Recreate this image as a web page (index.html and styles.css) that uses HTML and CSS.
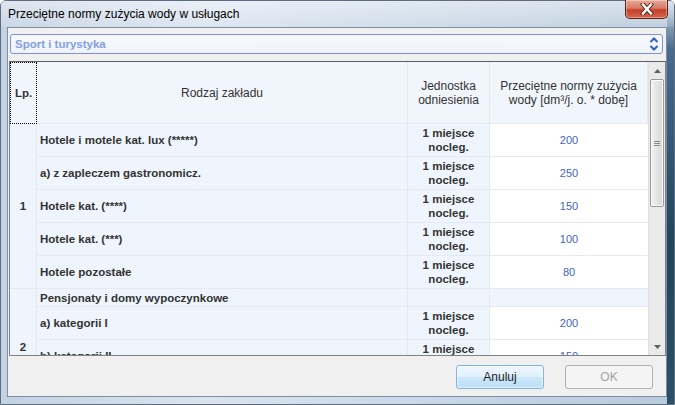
FILE: index.html
```html
<!DOCTYPE html>
<html lang="pl">
<head>
<meta charset="utf-8">
<title>Przeciętne normy zużycia wody w usługach</title>
<link rel="stylesheet" href="styles.css">
</head>
<body>
<div class="window">
  <div class="titlebar">
    <span class="title">Przeciętne normy zużycia wody w usługach</span>
    <div class="close">
      <svg width="18" height="12" viewBox="0 0 18 12"><path d="M5 1.5 L13 10.5 M13 1.5 L5 10.5" stroke="#5a2a20" stroke-width="4.2" stroke-linecap="square"/><path d="M5 1.5 L13 10.5 M13 1.5 L5 10.5" stroke="#ffffff" stroke-width="2.4" stroke-linecap="square"/></svg>
    </div>
  </div>
  <div class="client">
    <div class="combo">
      <span class="combo-text">Sport i turystyka</span>
      <svg class="combo-arrows" width="10" height="16" viewBox="0 0 10 16"><path d="M1.5 6 L5 2.5 L8.5 6 M1.5 10 L5 13.5 L8.5 10" fill="none" stroke="#2f5fc0" stroke-width="2"/></svg>
    </div>
    <div class="table">
      <div class="viewport">
        <div class="grid">
          <div class="hcell lp-head">Lp.</div>
          <div class="hcell">Rodzaj zakładu</div>
          <div class="hcell">Jednostka<br>odniesienia</div>
          <div class="hcell">Przeciętne normy zużycia<br>wody [dm³/j. o. * dobę]</div>

          <div class="lp lp1">1</div>
          <div class="name">Hotele i motele kat. lux (*****)</div>
          <div class="unit">1 miejsce<br>nocleg.</div>
          <div class="val">200</div>

          <div class="name">a) z zapleczem gastronomicz.</div>
          <div class="unit">1 miejsce<br>nocleg.</div>
          <div class="val">250</div>

          <div class="name">Hotele kat. (****)</div>
          <div class="unit">1 miejsce<br>nocleg.</div>
          <div class="val">150</div>

          <div class="name">Hotele kat. (***)</div>
          <div class="unit">1 miejsce<br>nocleg.</div>
          <div class="val">100</div>

          <div class="name">Hotele pozostałe</div>
          <div class="unit">1 miejsce<br>nocleg.</div>
          <div class="val">80</div>

          <div class="lp lp2">2</div>
          <div class="name">Pensjonaty i domy wypoczynkowe</div>
          <div class="unit"></div>
          <div class="val group"></div>

          <div class="name">a) kategorii I</div>
          <div class="unit">1 miejsce<br>nocleg.</div>
          <div class="val">200</div>

          <div class="name">b) kategorii II</div>
          <div class="unit">1 miejsce<br>nocleg.</div>
          <div class="val">150</div>

          <div class="name">c) kategorii III</div>
          <div class="unit">1 miejsce<br>nocleg.</div>
          <div class="val">100</div>
        </div>
      </div>
      <div class="vscroll">
        <div class="sbtn"><svg width="7" height="4" viewBox="0 0 7 4"><path d="M0 4 L3.5 0 L7 4 Z" fill="#606060"/></svg></div>
        <div class="track">
          <div class="thumb"><span class="grip"></span></div>
        </div>
        <div class="sbtn"><svg width="7" height="4" viewBox="0 0 7 4"><path d="M0 0 L3.5 4 L7 0 Z" fill="#606060"/></svg></div>
      </div>
    </div>
    <div class="footer">
      <button class="btn btn-default">Anuluj</button>
      <button class="btn" disabled>OK</button>
    </div>
  </div>
</div>
</body>
</html>
```
FILE: styles.css
```css
* { box-sizing: border-box; }
html, body { margin: 0; padding: 0; }
body {
  width: 675px;
  height: 405px;
  overflow: hidden;
  font-family: "Liberation Sans", Arial, sans-serif;
}
.window {
  width: 675px;
  height: 405px;
  display: flex;
  flex-direction: column;
  border: 1px solid #5d6d7e;
  border-radius: 6px 6px 0 0;
  background:
    linear-gradient(to bottom, #c4d3e2 0%, #4a6b8c 12%, #22445f 60%, #2c4f6a 100%) right top / 7px 100% no-repeat,
    linear-gradient(to right, #c3d2e2 0%, #d9e4ef 30%, #cbd9e8 60%, #b9cadb 100%);
}
.titlebar {
  height: 26px;
  flex: none;
  display: flex;
  align-items: center;
  padding-left: 7px;
  position: relative;
  background: linear-gradient(to bottom, rgba(255,255,255,0.45), rgba(255,255,255,0.1));
}
.title {
  font-family: "Liberation Sans", Arial, sans-serif;
  font-size: 12px;
  color: #000;
}
.close {
  position: absolute;
  top: -1px;
  right: 6px;
  width: 43px;
  height: 19px;
  border: 1px solid #5b2218;
  border-top: none;
  border-radius: 0 0 5px 5px;
  background: linear-gradient(to bottom, #e9a99b 0%, #d77a66 45%, #c4402a 55%, #d8654a 100%);
  box-shadow: inset 0 0 0 1px rgba(255,255,255,0.35);
  display: flex;
  align-items: center;
  justify-content: center;
}
.client {
  flex: 1;
  margin: 0 7px 7px 6px;
  border: 1px solid #7c8ea3;
  background: #f0f0f0;
  display: flex;
  flex-direction: column;
}
.combo {
  margin: 6px 3px 0 2px;
  height: 20px;
  flex: none;
  border: 1px solid #7f92d6;
  border-radius: 3px;
  background: linear-gradient(to bottom, #f7f9fd, #eef3fb);
  display: flex;
  align-items: center;
  justify-content: space-between;
  padding: 0 2px 0 4px;
}
.combo-text {
  font-size: 11.5px;
  font-weight: bold;
  color: #86a0e2;
}
.combo-arrows { display: block; margin-right: 1px; }
.table {
  margin: 7px 0 0 1px;
  height: 295px;
  flex: none;
  border: 1px solid #7d8288;
  border-top-color: #5c6066;
  display: flex;
  background: #ffffff;
}
.viewport {
  width: 638px;
  height: 293px;
  overflow: hidden;
}
.grid {
  display: grid;
  grid-template-columns: 27px 371px 82px 158px;
  grid-template-rows: 62px repeat(5, 33px) 18px repeat(3, 33px);
  color: #333333;
}
.hcell {
  background: #f1f6fc;
  border-right: 1px solid #e3eaf2;
  border-bottom: 1px solid #e3eaf2;
  display: flex;
  align-items: center;
  justify-content: center;
  text-align: center;
  font-size: 12px;
  line-height: 14px;
  color: #333333;
}
.lp-head {
  font-weight: bold;
  font-size: 11.5px;
  border: 1px dotted #000;
}
.lp {
  background: #eff5fc;
  border-right: 1px solid #e3eaf2;
  border-bottom: 1px solid #e3eaf2;
  display: flex;
  align-items: center;
  justify-content: center;
  font-size: 11.5px;
  font-weight: bold;
  grid-column: 1;
}
.lp1 { grid-row: 2 / span 5; }
.lp2 { grid-row: 7 / span 4; }
.name, .unit, .val {
  border-right: 1px solid #e3eaf2;
  border-bottom: 1px solid #e3eaf2;
  display: flex;
  align-items: center;
  font-size: 11.5px;
}
.name {
  background: #eff5fc;
  font-weight: bold;
  padding-left: 3px;
}
.unit {
  background: #eff5fc;
  font-weight: bold;
  justify-content: center;
  text-align: center;
  line-height: 14px;
}
.val {
  background: #ffffff;
  justify-content: center;
  color: #4163c8;
  font-size: 11px;
  border-right: none;
}
.val.group { background: #eff5fc; }
.vscroll {
  width: 17px;
  height: 293px;
  display: flex;
  flex-direction: column;
  background: #eaeaea;
  border-left: 1px solid #e0e0e0;
}
.sbtn {
  height: 17px;
  flex: none;
  display: flex;
  align-items: center;
  justify-content: center;
}
.track {
  flex: 1;
  padding: 0 1px;
}
.thumb {
  height: 128px;
  border: 1px solid #989898;
  border-radius: 2px;
  background: linear-gradient(to right, #f4f4f4, #e4e4e4 50%, #d8d8d8);
  display: flex;
  align-items: center;
  justify-content: center;
  box-shadow: inset 0 0 0 1px #fbfbfb;
}
.grip {
  width: 6px;
  height: 5px;
  border-top: 1px solid #8a8a8a;
  border-bottom: 1px solid #8a8a8a;
  background: linear-gradient(#8a8a8a, #8a8a8a) center / 6px 1px no-repeat;
}
.footer {
  flex: 1;
  display: flex;
  justify-content: flex-end;
  align-items: flex-start;
  gap: 21px;
  padding: 9px 13px 0 0;
}
.btn {
  width: 88px;
  height: 24px;
  border-radius: 3px;
  font-family: "Liberation Sans", Arial, sans-serif;
  font-size: 12px;
  padding: 0;
  border: 1px solid #adb2b5;
  background: #f4f4f4;
  color: #a3a3a3;
}
.btn-default {
  border-color: #7eb4ea;
  background: linear-gradient(to bottom, #eef7fe 0%, #e0f0fc 50%, #cde7fa 51%, #bcdff7 100%);
  color: #1e1e1e;
  box-shadow: inset 0 0 0 1px rgba(255,255,255,0.6);
}
```
